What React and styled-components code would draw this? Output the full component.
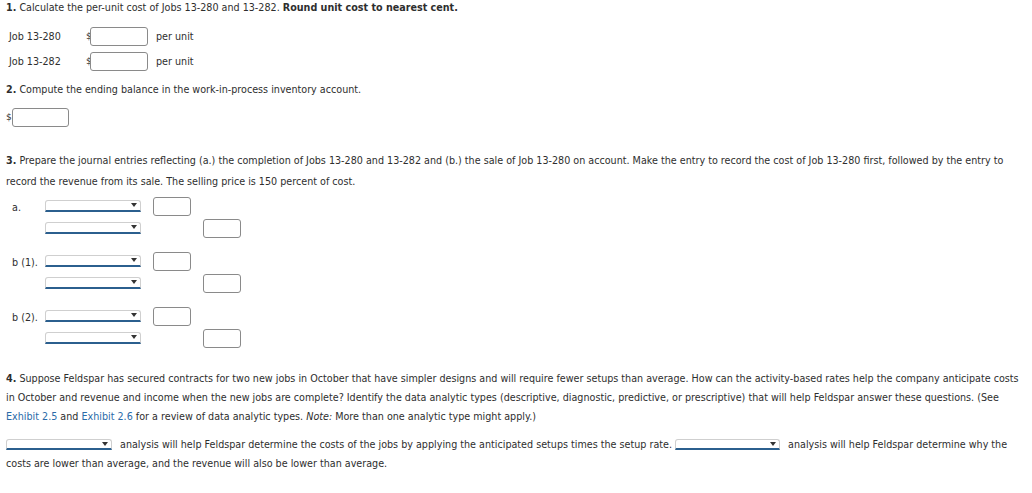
import React from "react";
import styled, { createGlobalStyle } from "styled-components";

const Global = createGlobalStyle`
  html, body { margin: 0; padding: 0; background: #fff; }
  body { font-family: "DejaVu Sans", Verdana, sans-serif; font-size: 9.6px; color: #2e2e2e; }
`;

const Page = styled.div`
  padding: 1px 4px 0 6px;
  width: 1032px;
  box-sizing: border-box;
`;

const Para = styled.p`
  margin: ${(p) => p.$mt || 0}px 0 0 0;
  line-height: ${(p) => p.$lh || 14}px;
`;

const Num = styled.b`
  font-weight: bold;
`;

const Link = styled.span`
  color: #2a6aa8;
`;

const CostTable = styled.div`
  margin-top: 12px;
  display: grid;
  grid-template-columns: 77px 4px 58px auto;
  row-gap: 6px;
  align-items: center;
  padding-left: 3px;
`;

const Label = styled.span`
  line-height: 19px;
`;

const Dollar = styled.span`
  line-height: 19px;
  font-size: 9px;
`;

const Box = styled.div`
  width: ${(p) => p.$w || 38}px;
  height: 19px;
  box-sizing: border-box;
  border: 1px solid #8a8a8a;
  border-radius: 3px;
  background: #fff;
`;

const Unit = styled.span`
  padding-left: 8px;
`;

const BalanceRow = styled.div`
  margin-top: 11px;
  display: flex;
  align-items: center;
`;

const Journal = styled.div`
  margin-top: 5px;
  padding-left: 6px;
  display: flex;
  flex-direction: column;
  gap: 15px;
`;

const Group = styled.div`
  display: grid;
  grid-template-columns: 33px 96px 12px 38px 12px 38px;
  grid-template-rows: 18px 18px;
  row-gap: 4px;
  align-items: center;
`;

const EntryLabel = styled.span`
  grid-column: 1;
  grid-row: 1;
  padding-top: 3px;
  white-space: nowrap;
`;

const Select = styled.div`
  position: relative;
  display: ${(p) => (p.$inline ? "inline-block" : "block")};
  width: ${(p) => p.$w || 96}px;
  height: ${(p) => p.$h || 12}px;
  box-sizing: border-box;
  border: 1px solid #cfcfcf;
  border-bottom: 2px solid #2b5f8e;
  border-radius: 3px 3px 0 0;
  background: #fff;
  vertical-align: ${(p) => (p.$inline ? "-2px" : "baseline")};
  &::after {
    content: "";
    position: absolute;
    right: 3px;
    top: 2px;
    border-left: 3px solid transparent;
    border-right: 3px solid transparent;
    border-top: 4px solid #333;
  }
`;

const Cell = styled.div`
  grid-column: ${(p) => p.$c};
  grid-row: ${(p) => p.$r};
`;

const Gap = styled.span`
  display: inline-block;
  width: ${(p) => p.$w}px;
`;

const entries = ["a.", "b (1).", "b (2)."];

export default function App() {
  return (
    <Page>
      <Global />
      <Para>
        <Num>1.</Num> Calculate the per-unit cost of Jobs 13-280 and 13-282. <b>Round unit cost to nearest cent.</b>
      </Para>
      <CostTable>
        <Label>Job 13-280</Label>
        <Dollar>$</Dollar>
        <Box $w={58} />
        <Unit>per unit</Unit>
        <Label>Job 13-282</Label>
        <Dollar>$</Dollar>
        <Box $w={58} />
        <Unit>per unit</Unit>
      </CostTable>
      <Para $mt={12}>
        <Num>2.</Num> Compute the ending balance in the work-in-process inventory account.
      </Para>
      <BalanceRow>
        <Dollar>$</Dollar>
        <Box $w={57} />
      </BalanceRow>
      <Para $mt={23} $lh={21}>
        <Num>3.</Num> Prepare the journal entries reflecting (a.) the completion of Jobs 13-280 and 13-282 and (b.) the sale of Job 13-280 on account. Make the entry to record the cost of Job 13-280 first, followed by the entry to record the revenue from its sale. The selling price is 150 percent of cost.
      </Para>
      <Journal>
        {entries.map((e) => (
          <Group key={e}>
            <EntryLabel>{e}</EntryLabel>
            <Cell $c={2} $r={1}><Select /></Cell>
            <Cell $c={4} $r={1}><Box /></Cell>
            <Cell $c={2} $r={2}><Select /></Cell>
            <Cell $c={6} $r={2}><Box /></Cell>
          </Group>
        ))}
      </Journal>
      <Para $mt={22} $lh={19}>
        <Num>4.</Num> Suppose Feldspar has secured contracts for two new jobs in October that have simpler designs and will require fewer setups than average. How can the activity-based rates help the company anticipate costs in October and revenue and income when the new jobs are complete? Identify the data analytic types (descriptive, diagnostic, predictive, or prescriptive) that will help Feldspar answer these questions. (See <Link>Exhibit 2.5</Link> and <Link>Exhibit 2.6</Link> for a review of data analytic types. <i>Note:</i> More than one analytic type might apply.)
      </Para>
      <Para $mt={9} $lh={19}>
        <Select $inline $w={106} $h={11} /><Gap $w={8} />analysis will help Feldspar determine the costs of the jobs by applying the anticipated setups times the setup rate. <Select $inline $w={105} $h={11} /><Gap $w={8} />analysis will help Feldspar determine why the costs are lower than average, and the revenue will also be lower than average.
      </Para>
    </Page>
  );
}
